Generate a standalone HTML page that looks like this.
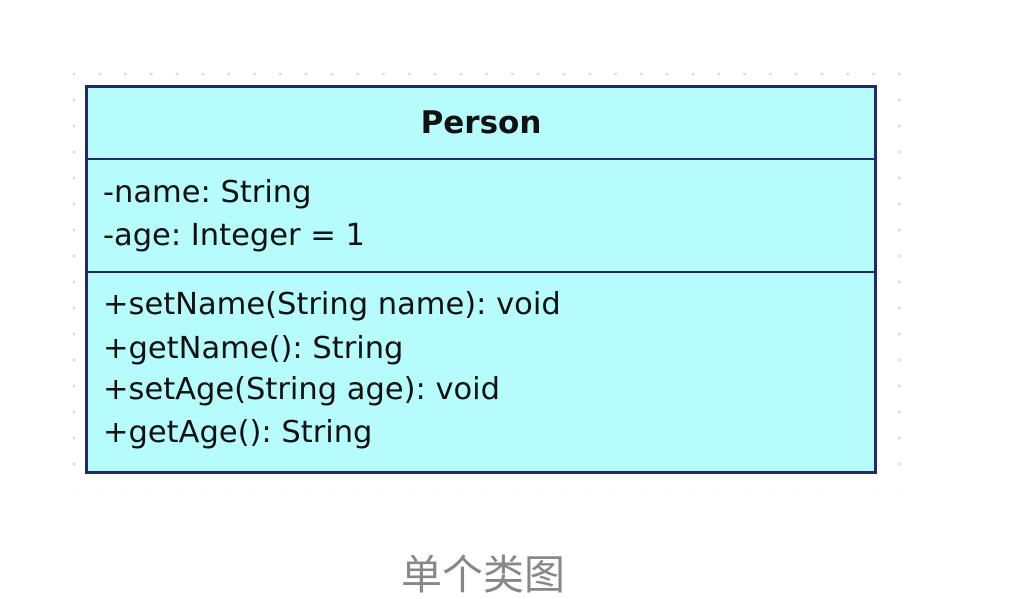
<!DOCTYPE html>
<html><head><meta charset="utf-8"><style>
body{margin:0;width:1024px;height:594px;background:#fff;position:relative;overflow:hidden;font-family:"DejaVu Sans","Liberation Sans",sans-serif}
.grid{position:absolute;left:73px;top:73px;width:832px;height:416px;
background-image:radial-gradient(circle,#d8d8d8 1.2px,transparent 1.6px);background-size:25.8px 26px;background-position:-12px -12px}
.box{position:absolute;left:85px;top:85px;width:786px;height:383px;border:3px solid #1f2a6a;background:#b6fcfc;color:#111}
.hd{position:absolute;left:0;top:0;width:100%;height:70px;border-bottom:2px solid #1f2a6a;text-align:center;font-weight:bold;font-size:31px;line-height:70px}
.at{position:absolute;left:0;top:72px;width:100%;height:111px;border-bottom:2px solid #1f2a6a}
.t{position:absolute;left:15px;font-size:30.5px;white-space:nowrap;letter-spacing:0;line-height:30px}
.cap{position:absolute;left:401px;top:551px;font-family:"Liberation Sans","Noto Sans CJK SC",sans-serif;font-size:41px;color:#888;line-height:48px}
</style></head><body>
<div class="grid"></div>
<div class="box">
<div class="hd">Person</div>
<div class="at"></div>
<div class="t" style="top:90px">-name: String</div>
<div class="t" style="top:133px">-age: Integer = 1</div>
<div class="t" style="top:202px">+setName(String name): void</div>
<div class="t" style="top:246px">+getName(): String</div>
<div class="t" style="top:287px">+setAge(String age): void</div>
<div class="t" style="top:330px">+getAge(): String</div>
</div>
<div class="cap">单个类图</div>
</body></html>
